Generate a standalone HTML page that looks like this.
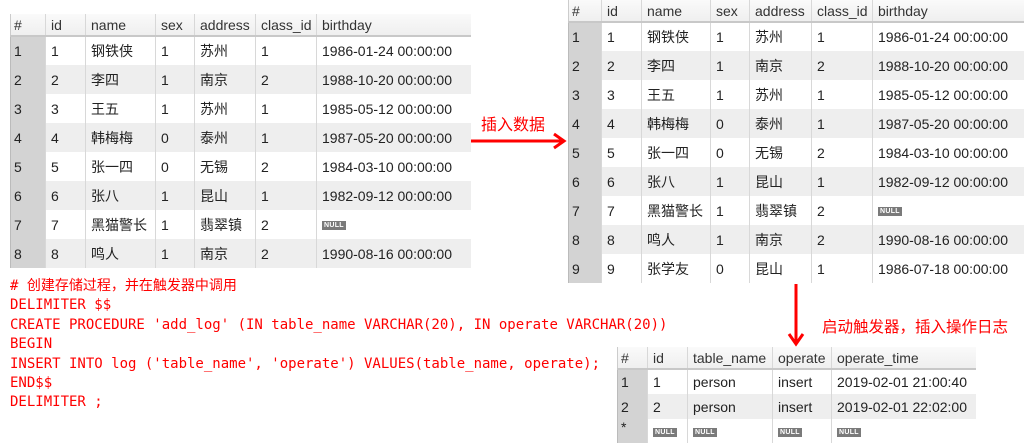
<!DOCTYPE html>
<html><head><meta charset="utf-8"><style>
*{margin:0;padding:0;box-sizing:border-box}
body{width:1024px;height:445px;background:#fff;position:relative;overflow:hidden;font-family:"Liberation Sans","Noto Sans CJK SC",sans-serif;font-size:14px;color:#222}
table{position:absolute;border-collapse:collapse;table-layout:fixed}
td,th{padding:0 0 0 5px;text-align:left;font-weight:normal;white-space:nowrap;overflow:hidden;border-left:1px solid #d8d8d8}
th{background:linear-gradient(#fafafa,#efefef);color:#333;border-bottom:2px solid #c8c8c8}
td:first-child{background:#d3d3d3;border-left:1px solid #bbb;padding-left:3px}
th:first-child{border-left:1px solid #ccc;padding-left:3px}
tr.e td{background:#eeeeee}
tr.e td:first-child{background:#d3d3d3}
.n{display:inline-block;background:#7a7a7a;color:#fff;font-size:7px;font-weight:bold;padding:1px 2px;line-height:7px;vertical-align:middle;letter-spacing:0.3px}
.code{position:absolute;left:10px;top:277px;font-family:"DejaVu Sans Mono","Noto Sans CJK SC",monospace;font-size:14px;line-height:19.4px;color:#f00;white-space:pre}
.lbl{position:absolute;color:#f00;font-family:"Liberation Sans","Noto Sans CJK SC",sans-serif}
</style></head><body>

<table style="left:10px;top:14px;width:460px">
<colgroup><col style="width:35px"><col style="width:40px"><col style="width:70px"><col style="width:39px"><col style="width:61px"><col style="width:61px"><col style="width:154px"></colgroup>
<tr style="height:22px"><th>#</th><th>id</th><th>name</th><th>sex</th><th>address</th><th>class_id</th><th>birthday</th></tr>
<tr style="height:29px"><td>1</td><td>1</td><td>钢铁侠</td><td>1</td><td>苏州</td><td>1</td><td>1986-01-24 00:00:00</td></tr>
<tr class="e" style="height:29px"><td>2</td><td>2</td><td>李四</td><td>1</td><td>南京</td><td>2</td><td>1988-10-20 00:00:00</td></tr>
<tr style="height:29px"><td>3</td><td>3</td><td>王五</td><td>1</td><td>苏州</td><td>1</td><td>1985-05-12 00:00:00</td></tr>
<tr class="e" style="height:29px"><td>4</td><td>4</td><td>韩梅梅</td><td>0</td><td>泰州</td><td>1</td><td>1987-05-20 00:00:00</td></tr>
<tr style="height:29px"><td>5</td><td>5</td><td>张一四</td><td>0</td><td>无锡</td><td>2</td><td>1984-03-10 00:00:00</td></tr>
<tr class="e" style="height:29px"><td>6</td><td>6</td><td>张八</td><td>1</td><td>昆山</td><td>1</td><td>1982-09-12 00:00:00</td></tr>
<tr style="height:29px"><td>7</td><td>7</td><td>黑猫警长</td><td>1</td><td>翡翠镇</td><td>2</td><td><span class="n">NULL</span></td></tr>
<tr class="e" style="height:29px"><td>8</td><td>8</td><td>鸣人</td><td>1</td><td>南京</td><td>2</td><td>1990-08-16 00:00:00</td></tr>
</table>

<table style="left:568px;top:0px;width:456px">
<colgroup><col style="width:33px"><col style="width:40px"><col style="width:69px"><col style="width:39px"><col style="width:62px"><col style="width:61px"><col style="width:152px"></colgroup>
<tr style="height:22px"><th>#</th><th>id</th><th>name</th><th>sex</th><th>address</th><th>class_id</th><th>birthday</th></tr>
<tr style="height:29px"><td>1</td><td>1</td><td>钢铁侠</td><td>1</td><td>苏州</td><td>1</td><td>1986-01-24 00:00:00</td></tr>
<tr class="e" style="height:29px"><td>2</td><td>2</td><td>李四</td><td>1</td><td>南京</td><td>2</td><td>1988-10-20 00:00:00</td></tr>
<tr style="height:29px"><td>3</td><td>3</td><td>王五</td><td>1</td><td>苏州</td><td>1</td><td>1985-05-12 00:00:00</td></tr>
<tr class="e" style="height:29px"><td>4</td><td>4</td><td>韩梅梅</td><td>0</td><td>泰州</td><td>1</td><td>1987-05-20 00:00:00</td></tr>
<tr style="height:29px"><td>5</td><td>5</td><td>张一四</td><td>0</td><td>无锡</td><td>2</td><td>1984-03-10 00:00:00</td></tr>
<tr class="e" style="height:29px"><td>6</td><td>6</td><td>张八</td><td>1</td><td>昆山</td><td>1</td><td>1982-09-12 00:00:00</td></tr>
<tr style="height:29px"><td>7</td><td>7</td><td>黑猫警长</td><td>1</td><td>翡翠镇</td><td>2</td><td><span class="n">NULL</span></td></tr>
<tr class="e" style="height:29px"><td>8</td><td>8</td><td>鸣人</td><td>1</td><td>南京</td><td>2</td><td>1990-08-16 00:00:00</td></tr>
<tr style="height:29px"><td>9</td><td>9</td><td>张学友</td><td>0</td><td>昆山</td><td>1</td><td>1986-07-18 00:00:00</td></tr>
</table>

<table style="left:617px;top:347px;width:358px">
<colgroup><col style="width:30px"><col style="width:40px"><col style="width:85px"><col style="width:59px"><col style="width:144px"></colgroup>
<tr style="height:22px"><th>#</th><th>id</th><th>table_name</th><th>operate</th><th>operate_time</th></tr>
<tr style="height:25px"><td>1</td><td>1</td><td>person</td><td>insert</td><td>2019-02-01 21:00:40</td></tr>
<tr class="e" style="height:25px"><td>2</td><td>2</td><td>person</td><td>insert</td><td>2019-02-01 22:02:00</td></tr>
<tr style="height:24px"><td style="vertical-align:top">*</td><td><span class="n">NULL</span></td><td><span class="n">NULL</span></td><td><span class="n">NULL</span></td><td><span class="n">NULL</span></td></tr>
</table>

<div class="code"># 创建存储过程，并在触发器中调用
DELIMITER $$
CREATE PROCEDURE 'add_log' (IN table_name VARCHAR(20), IN operate VARCHAR(20))
BEGIN
INSERT INTO log ('table_name', 'operate') VALUES(table_name, operate);
END$$
DELIMITER ;</div>

<div class="lbl" style="left:481px;top:111px;font-size:16px">插入数据</div>
<svg style="position:absolute;left:468px;top:130px" width="100" height="22"><line x1="3" y1="11" x2="96" y2="11" stroke="#f00" stroke-width="3"/><polyline points="86,4 96,11 86,18" fill="none" stroke="#f00" stroke-width="3"/></svg>

<div class="lbl" style="left:822px;top:315px;font-size:15.5px">启动触发器，插入操作日志</div>
<svg style="position:absolute;left:785px;top:282px" width="22" height="66"><line x1="11" y1="2" x2="11" y2="62" stroke="#f00" stroke-width="3"/><polyline points="4,52 11,62 18,52" fill="none" stroke="#f00" stroke-width="3"/></svg>
</body></html>
